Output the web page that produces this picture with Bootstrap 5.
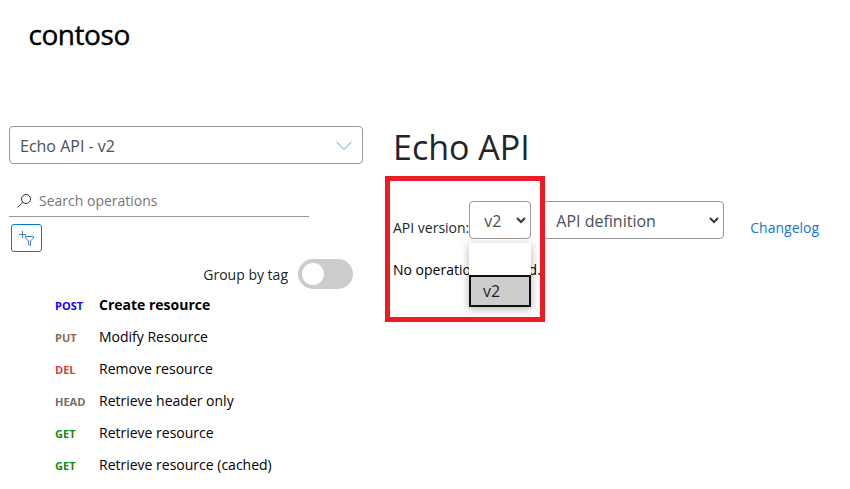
<!DOCTYPE html>
<html lang="en">
<head>
<meta charset="utf-8">
<meta name="viewport" content="width=device-width, initial-scale=1">
<title>Echo API</title>
<link href="https://cdn.jsdelivr.net/npm/bootstrap@5.3.0/dist/css/bootstrap.min.css" rel="stylesheet">
<style>
body{font-family:"Open Sans","Noto Sans",sans-serif;font-size:14px;line-height:20px;color:#212529;background:#fff;height:489px;overflow:hidden}
.site-head{height:126px;padding:18px 0 0 28.500px}
.logo{font-family:"Open Sans",sans-serif;font-size:28px;line-height:32px;color:#000;font-weight:400;-webkit-text-stroke:.4px #000;letter-spacing:-.45px}
.side{width:354px;margin-left:9px}
.content-col{margin-left:30px;width:440px}
.picker{height:38px;border:1px solid #999;border-radius:4px;font-size:16px;line-height:24px;color:#495057;background:#fff}
.api-picker{padding:0 9px 0 10px}
.api-picker span,.definition span,.version span{padding-top:2px}
.version span{padding-left:1px}
.search{width:300px;height:33px;margin-top:20px;border-bottom:1px solid #999;padding-left:8px;color:#757575}
.search span,.toggle-row>span{padding-top:2px}
.filter{width:31px;height:28px;margin:7px 0 0 2px;border:1px solid #0078d4;border-radius:3px}
.toggle-row{height:30px;margin-top:7px;padding-right:10px;gap:10px}
.switch-track{width:55px;height:30px;border-radius:15px;background:#ccc;padding:4px}
.switch-knob{width:22px;height:22px;border-radius:50%;background:#fff}
.ops{padding-left:46px;color:#000}
.ops li{height:32px}
.verb{width:44px;font-size:11px;font-weight:700;padding-top:2px}
.post{color:#1400ff}.put{color:#8a6a50}.del{color:#cf3e3e}.hd{color:#6e6e6e}.get{color:#128a12}
h1{font-size:34px;line-height:42px;font-weight:400;margin:0}
.controls{height:38px;margin-top:33px}
.version{width:62px;padding:0 4px 0 13px}
.definition{width:181px;margin-left:12px;padding:0 4px 0 12px}
.below{padding-top:15px}
.changelog{margin-left:26px;color:#1476d1}
.options{left:76px;top:42px;width:62px;height:64px;z-index:2;box-shadow:0 2px 8px rgba(0,0,0,.3);font-size:16px;background:#fff}
.chosen{height:32px;background:#ccc;border:2px solid #101010;padding-left:12px}
.highlight{left:-8px;top:-25px;width:160px;height:146px;border:5px solid #ed1c24;z-index:3;pointer-events:none}
.empty-note{margin-top:21px;color:#000}
</style>
<script src="https://cdn.jsdelivr.net/npm/bootstrap@5.3.0/dist/js/bootstrap.bundle.min.js"></script>
</head>
<body>
<header class="site-head"><span class="logo">contoso</span></header>
<main class="d-flex align-items-start">
  <aside class="side flex-shrink-0">
    <div class="picker api-picker d-flex align-items-center justify-content-between">
      <span>Echo API - v2</span>
      <svg width="18" height="10" viewBox="0 0 18 10" fill="none" stroke="#6d9fc0"><path d="M1.500 2 9 9.300 16.500 2"/></svg>
    </div>
    <div class="search d-flex align-items-center gap-2">
      <svg width="14" height="15" viewBox="0 0 14 15" fill="none" stroke="#333"><circle cx="9" cy="6" r="4.500"/><path d="M5.800 9.300.5 14.500"/></svg>
      <span>Search operations</span>
    </div>
    <div class="filter">
      <svg class="d-block" width="29" height="26" viewBox="0 0 29 26" fill="none" stroke="#3f7ccb"><path d="M10.500 6v7M7 9.500h7M13.500 11.500h8v1.500l-3 3v4.500l-2-1V16l-3-3z"/></svg>
    </div>
    <div class="toggle-row d-flex align-items-center justify-content-end">
      <span>Group by tag</span>
      <div class="switch-track"><div class="switch-knob"></div></div>
    </div>
    <ul class="ops list-unstyled mb-0">
      <li class="d-flex align-items-center"><span class="verb post">POST</span><strong>Create resource</strong></li>
      <li class="d-flex align-items-center"><span class="verb put">PUT</span><span>Modify Resource</span></li>
      <li class="d-flex align-items-center"><span class="verb del">DEL</span><span>Remove resource</span></li>
      <li class="d-flex align-items-center"><span class="verb hd">HEAD</span><span>Retrieve header only</span></li>
      <li class="d-flex align-items-center"><span class="verb get">GET</span><span>Retrieve resource</span></li>
      <li class="d-flex align-items-center"><span class="verb get">GET</span><span>Retrieve resource (cached)</span></li>
    </ul>
  </aside>
  <section class="content-col flex-shrink-0">
    <h1>Echo API</h1>
    <div class="controls d-flex align-items-center position-relative">
      <span class="below flex-grow-0 text-nowrap">API version:</span>
      <div class="picker version d-flex flex-shrink-0 align-items-center justify-content-between">
        <span>v2</span>
        <svg width="10" height="7" viewBox="0 0 10 7" fill="none" stroke="#343a40" stroke-width="2"><path d="M1 1l4 4 4-4"/></svg>
      </div>
      <div class="picker definition d-flex flex-shrink-0 align-items-center justify-content-between">
        <span>API definition</span>
        <svg width="10" height="7" viewBox="0 0 10 7" fill="none" stroke="#343a40" stroke-width="2"><path d="M1 1l4 4 4-4"/></svg>
      </div>
      <a class="below changelog text-decoration-none" href="#">Changelog</a>
      <div class="options position-absolute d-flex flex-column justify-content-end"><div class="chosen d-flex align-items-center">v2</div></div>
      <div class="highlight position-absolute"></div>
    </div>
    <p class="empty-note mb-0">No operation selected.</p>
  </section>
</main>
</body>
</html>
